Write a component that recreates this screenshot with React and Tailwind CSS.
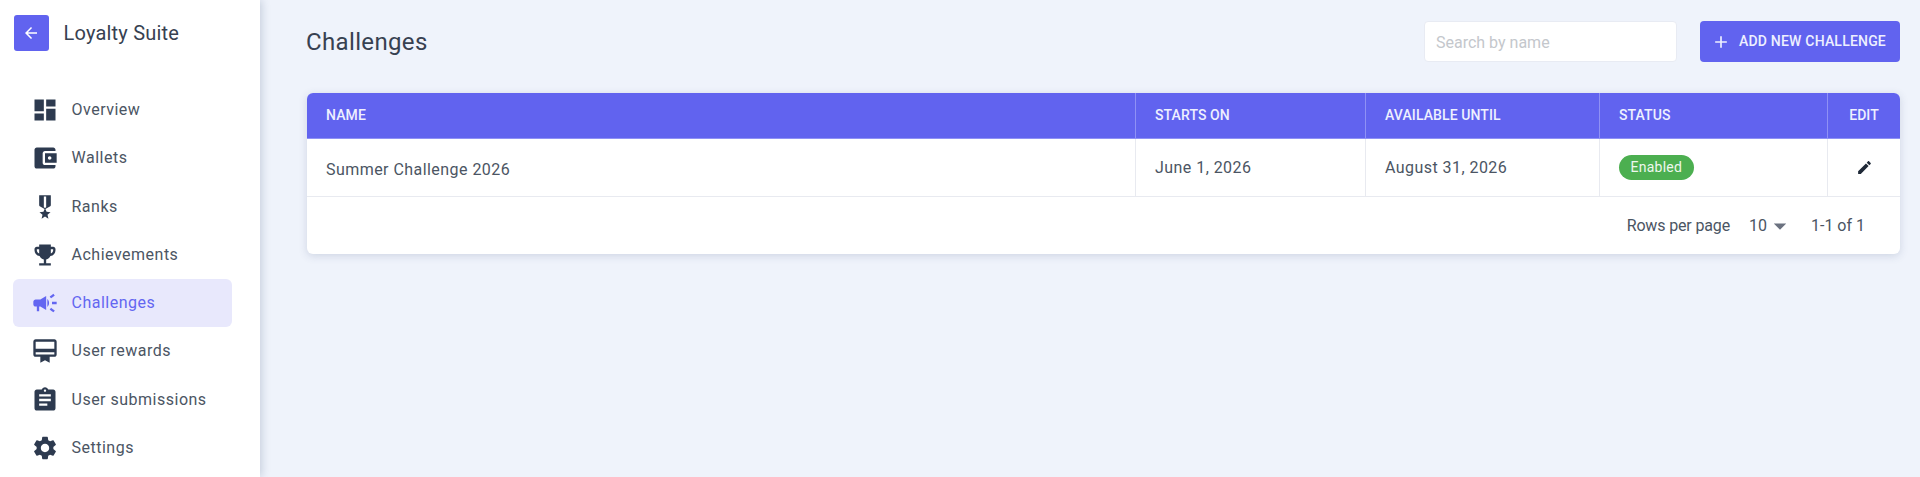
const roboto = { fontFamily: 'Roboto, sans-serif' }

function Icon({ d, className = 'w-7 h-7' }) {
  return (
    <svg viewBox="0 0 24 24" fill="currentColor" className={`shrink-0 ${className}`}>
      <path d={d} />
    </svg>
  )
}

const navItems = [
  { label: 'Overview', d: 'M3 13h8V3H3v10zm0 8h8v-6H3v6zm10 0h8V11h-8v10zm0-18v6h8V3h-8z' },
  { label: 'Wallets', d: 'M21 18v1c0 1.1-.9 2-2 2H5c-1.11 0-2-.9-2-2V5c0-1.1.89-2 2-2h14c1.1 0 2 .9 2 2v1h-9c-1.11 0-2 .9-2 2v8c0 1.1.89 2 2 2h9zm-9-2h10V8H12v8zm4-2.5c-.83 0-1.5-.67-1.5-1.5s.67-1.5 1.5-1.5 1.5.67 1.5 1.5-.67 1.5-1.5 1.5z' },
  { label: 'Ranks', d: 'M17 10.43V2H7v8.43c0 .35.18.68.49.86l4.18 2.51-.99 2.34-3.41.29 2.59 2.24L9.07 22 12 20.23 14.93 22l-.78-3.33 2.59-2.24-3.41-.29-.99-2.34 4.18-2.51c.3-.18.48-.5.48-.86zm-4 1.8l-1 .6-1-.6V3h2v9.23z' },
  { label: 'Achievements', d: 'M19 5h-2V3H7v2H5c-1.1 0-2 .9-2 2v1c0 2.55 1.92 4.63 4.39 4.94.63 1.5 1.98 2.63 3.61 2.96V19H7v2h10v-2h-4v-3.1c1.63-.33 2.98-1.46 3.61-2.96C19.08 12.63 21 10.55 21 8V7c0-1.1-.9-2-2-2zM5 8V7h2v3.82C5.84 10.4 5 9.3 5 8zm14 0c0 1.3-.84 2.4-2 2.82V7h2v1z' },
  { label: 'Challenges', active: true, d: 'M18 11v2h4v-2h-4zm-2 6.61c.96.71 2.21 1.65 3.2 2.39.4-.53.8-1.07 1.2-1.6-.99-.74-2.24-1.68-3.2-2.4-.4.54-.8 1.08-1.2 1.61zM20.4 5.6c-.4-.53-.8-1.07-1.2-1.6-.99.74-2.24 1.68-3.2 2.4.4.53.8 1.07 1.2 1.6.96-.72 2.21-1.65 3.2-2.4zM4 9c-1.1 0-2 .9-2 2v2c0 1.1.9 2 2 2h1v4h2v-4h1l5 3V6L8 9H4zm11.5 3c0-1.33-.58-2.53-1.5-3.35v6.69c.92-.81 1.5-2.01 1.5-3.34z' },
  { label: 'User rewards', d: 'M20 2H4c-1.11 0-2 .89-2 2v11c0 1.11.89 2 2 2h4v5l4-2 4 2v-5h4c1.11 0 2-.89 2-2V4c0-1.11-.89-2-2-2zm0 13H4v-2h16v2zm0-5H4V4h16v6z' },
  { label: 'User submissions', d: 'M19 3h-4.18C14.4 1.84 13.3 1 12 1c-1.3 0-2.4.84-2.82 2H5c-1.1 0-2 .9-2 2v14c0 1.1.9 2 2 2h14c1.1 0 2-.9 2-2V5c0-1.1-.9-2-2-2zm-7 0c.55 0 1 .45 1 1s-.45 1-1 1-1-.45-1-1 .45-1 1-1zm2 14H7v-2h7v2zm3-4H7v-2h10v2zm0-4H7V7h10v2z' },
  { label: 'Settings', d: 'M19.14 12.94c.04-.3.06-.61.06-.94 0-.32-.02-.64-.07-.94l2.03-1.58c.18-.14.23-.41.12-.61l-1.92-3.32c-.12-.22-.37-.29-.59-.22l-2.39.96c-.5-.38-1.03-.7-1.62-.94l-.36-2.54c-.04-.24-.24-.41-.48-.41h-3.84c-.24 0-.43.17-.47.41l-.36 2.54c-.59.24-1.13.57-1.62.94l-2.39-.96c-.22-.08-.47 0-.59.22L2.74 8.87c-.12.21-.08.47.12.61l2.03 1.58c-.05.3-.09.63-.09.94s.02.64.07.94l-2.03 1.58c-.18.14-.23.41-.12.61l1.92 3.32c.12.22.37.29.59.22l2.39-.96c.5.38 1.03.7 1.62.94l.36 2.54c.05.24.24.41.48.41h3.84c.24 0 .44-.17.47-.41l.36-2.54c.59-.24 1.13-.56 1.62-.94l2.39.96c.22.08.47 0 .59-.22l1.92-3.32c.12-.22.07-.47-.12-.61l-2.01-1.58zM12 15.6c-1.98 0-3.6-1.62-3.6-3.6s1.62-3.6 3.6-3.6 3.6 1.62 3.6 3.6-1.62 3.6-3.6 3.6z' },
]

function Sidebar() {
  return (
    <aside className="w-[260px] shrink-0 h-full bg-white shadow-[2px_0_8px_rgba(60,80,120,0.22)] z-10 pl-[13px] pr-[28px] pt-[15px]">
      <div className="flex items-center gap-[15px] h-[35px]">
        <button className="ml-[0.5px] w-[35px] h-[36px] rounded-[3px] bg-[#6163ef] text-white flex items-center justify-center">
          <Icon className="w-[18px] h-[18px]" d="M20 11H7.83l5.59-5.59L12 4l-8 8 8 8 1.41-1.41L7.83 13H20v-2z" />
        </button>
        <span className="text-[20px] tracking-[0.2px] text-[#374151]">Loyalty Suite</span>
      </div>
      <nav className="mt-[36px] flex flex-col gap-[0.3px]">
        {navItems.map((item) => (
          <div
            key={item.label}
            className={`flex items-center h-[48px] rounded-[6px] pl-[18px] ${item.active ? 'bg-[#e8e8fc] text-[#6366f1]' : 'text-[#2d3a4f]'}`}
          >
            <Icon d={item.d} />
            <span className={`ml-[12.5px] text-[16px] tracking-[0.5px] ${item.active ? '' : 'text-[#4b5563]'}`}>{item.label}</span>
          </div>
        ))}
      </nav>
    </aside>
  )
}

const gridCols = 'grid grid-cols-[829px_230px_234px_228px_72px]'

function HeaderCell({ children, last }) {
  return (
    <div className={`flex items-center px-[19px] text-[14px] font-medium tracking-[0.1px] text-[#eef0ff] ${last ? 'justify-center px-0' : 'border-r border-[#8f91f5]'}`}>
      {children}
    </div>
  )
}

function BodyCell({ children, last, className = '' }) {
  return (
    <div className={`flex items-center px-[19px] text-[16px] tracking-[0.45px] text-[#4b5563] ${last ? 'justify-center' : 'border-r border-[#e8eaf0]'} ${className}`}>
      {children}
    </div>
  )
}

function ChallengesTable() {
  return (
    <div className="mt-[31px] rounded-[6px] bg-white overflow-hidden shadow-[0_2px_8px_rgba(60,80,120,0.18)]">
      <div className={`${gridCols} h-[46px] bg-[#6163ef] border-b border-[#8f91f5]`}>
        <HeaderCell>NAME</HeaderCell>
        <HeaderCell>STARTS ON</HeaderCell>
        <HeaderCell>AVAILABLE UNTIL</HeaderCell>
        <HeaderCell>STATUS</HeaderCell>
        <HeaderCell last>EDIT</HeaderCell>
      </div>
      <div className={`${gridCols} h-[58px] border-b border-[#e8eaf0]`}>
        <BodyCell className="pt-[4px]">Summer Challenge 2026</BodyCell>
        <BodyCell>June 1, 2026</BodyCell>
        <BodyCell>August 31, 2026</BodyCell>
        <BodyCell>
          <span className="h-[25px] px-[11.5px] rounded-full bg-[#4caf50] text-[#eef7ee] text-[14px] tracking-[0.25px] flex items-center">Enabled</span>
        </BodyCell>
        <BodyCell last>
          <Icon className="w-[17px] h-[17px] text-[#1f2937]" d="M3 17.25V21h3.75L17.81 9.94l-3.75-3.75L3 17.25zM20.71 7.04c.39-.39.39-1.02 0-1.41l-2.34-2.34c-.39-.39-1.02-.39-1.41 0l-1.83 1.83 3.75 3.75 1.83-1.83z" />
        </BodyCell>
      </div>
      <div className="h-[57px] flex items-center justify-end pr-[35px] text-[16px] text-[#4b5563]">
        <span className="tracking-[-0.15px]">Rows per page</span>
        <span className="ml-[19px]">10</span>
        <Icon className="w-[30px] h-[30px] text-[#6b7280] -ml-[2px]" d="M7 10l5 5 5-5z" />
        <span className="ml-[16px]">1-1 of 1</span>
      </div>
    </div>
  )
}

export default function App() {
  return (
    <div className="flex h-screen overflow-hidden bg-[#eff3fb]" style={roboto}>
      <Sidebar />
      <main className="flex-1 min-w-0 pl-[47px] pr-[20px] pt-[21px]">
        <div className="flex items-center h-[41px]">
          <h1 className="-ml-[1px] text-[24px] tracking-[0.35px] text-[#374151]">Challenges</h1>
          <input
            placeholder="Search by name"
            className="ml-auto w-[253px] h-[41px] rounded-[4px] bg-white border border-[#e8ebf3] px-[11px] pt-[1px] text-[16px] placeholder:text-[#c4c7cc] outline-none"
          />
          <button className="ml-[23px] w-[200px] h-[41px] rounded-[4px] bg-[#6163ef] text-[#eef0ff] text-[14px] tracking-[0.2px] font-medium flex items-center pl-[11px]">
            <Icon className="w-[20px] h-[20px]" d="M19 13h-6v6h-2v-6H5v-2h6V5h2v6h6v2z" />
            <span className="ml-[8px]">ADD NEW CHALLENGE</span>
          </button>
        </div>
        <ChallengesTable />
      </main>
    </div>
  )
}
